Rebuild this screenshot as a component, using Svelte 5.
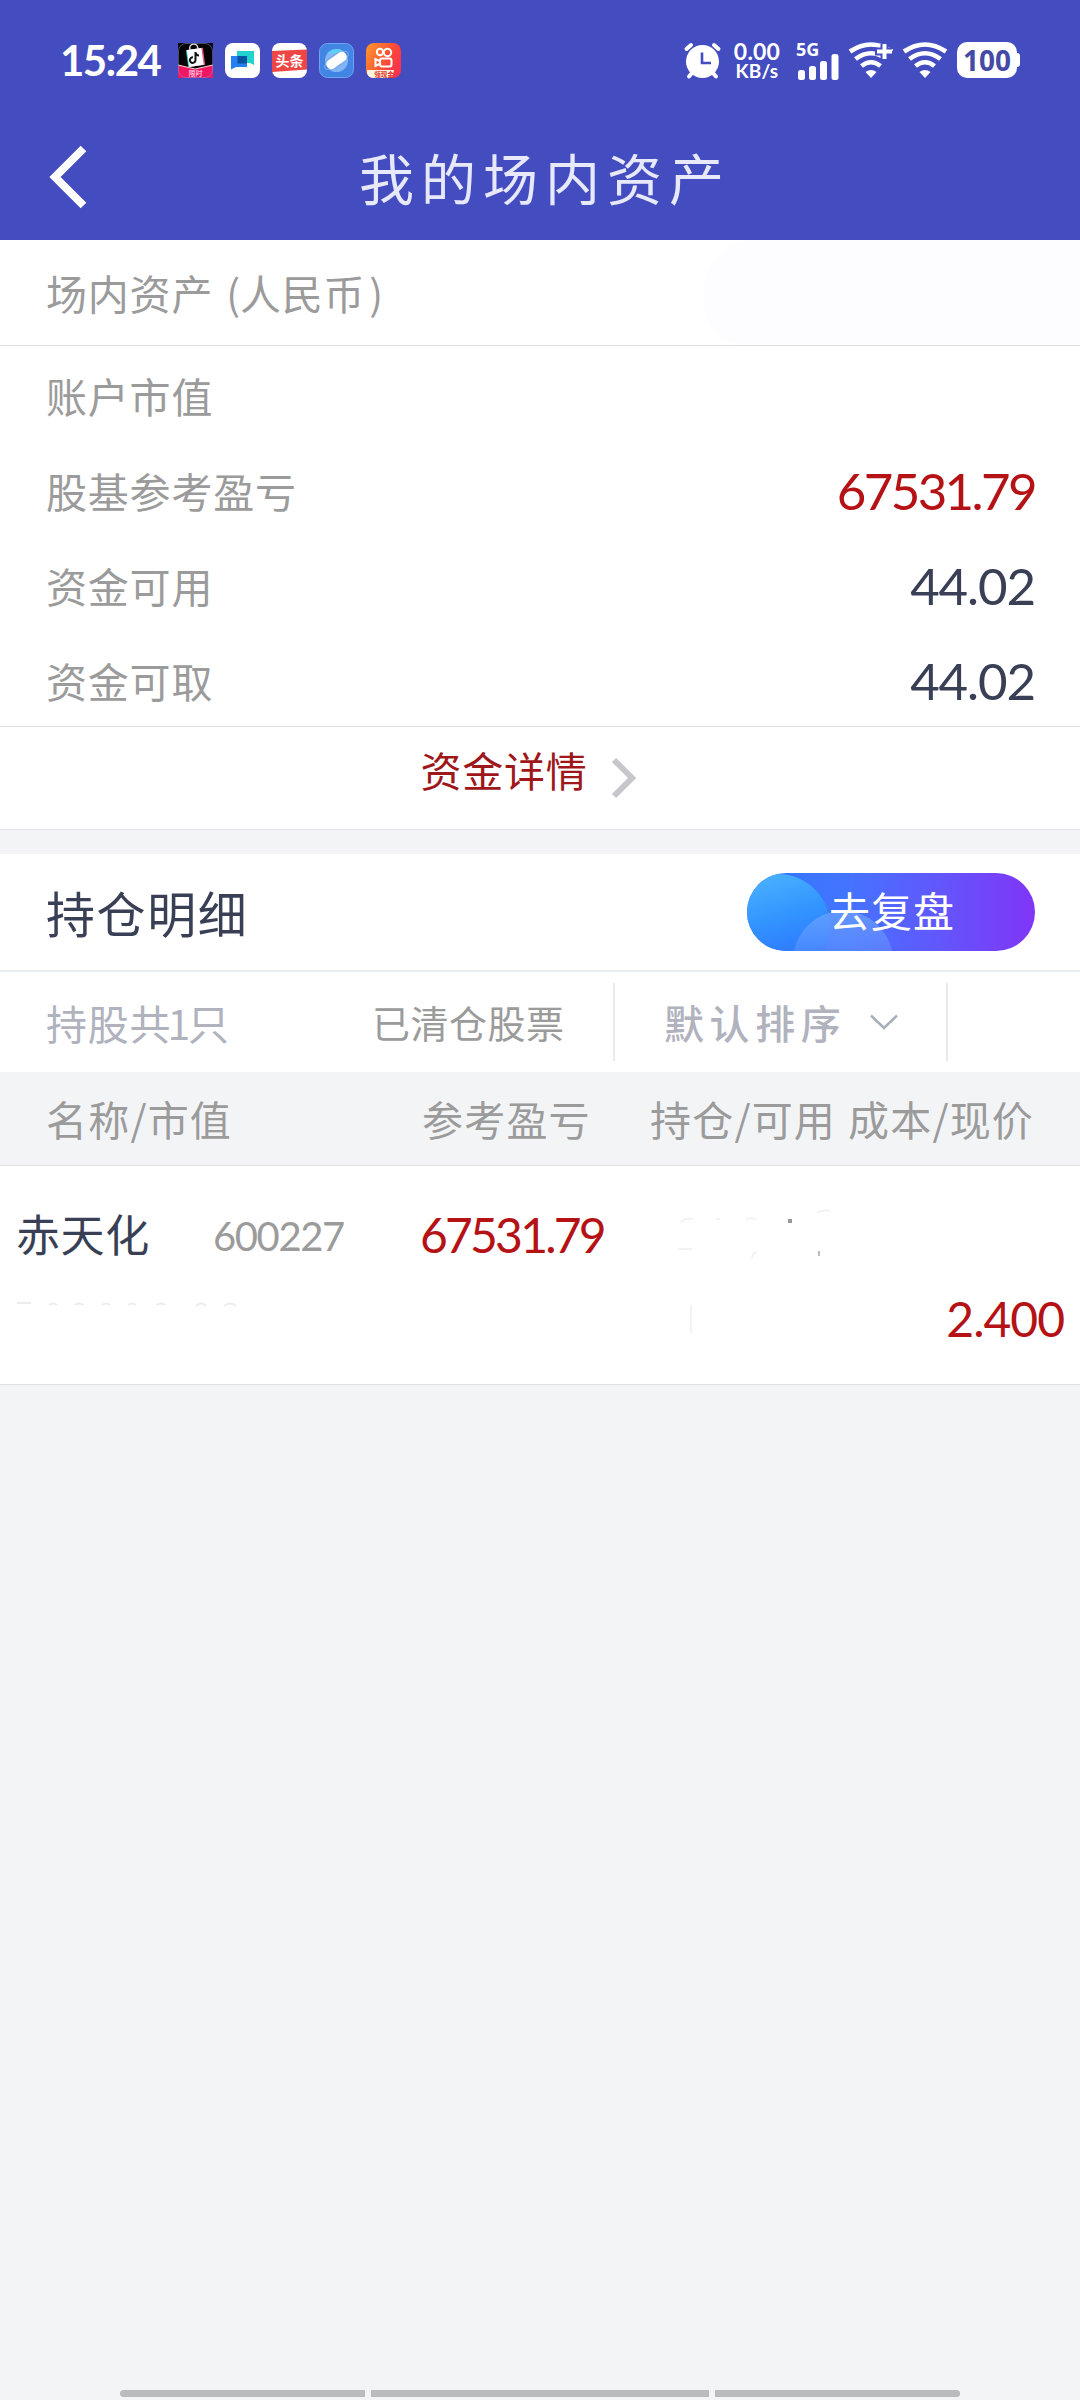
<script>
  const summary = [
    { label: '账户市值', value: '' },
    { label: '股基参考盈亏', value: '67531.79', gain: true },
    { label: '资金可用', value: '44.02' },
    { label: '资金可取', value: '44.02' }
  ];
  const holding = { name: '赤天化', code: '600227', profit: '67531.79', price: '2.400' };
</script>

<div class="screen">
  <header>
    <div class="status">
      <span class="time">15:24</span>
      <div class="apps">
        <svg viewBox="0 0 35 35">
          <defs><clipPath id="app"><rect width="35" height="35" rx="8" /></clipPath></defs>
          <g clip-path="url(#app)">
            <rect width="35" height="35" fill="#050508" />
            <g transform="rotate(-8 17 14)">
              <path d="M13 7V5a4 4 0 0 1 8 0v2" fill="none" stroke="#ddd" stroke-width="1.5" />
              <rect x="9" y="6" width="16" height="17" fill="#35dcd8" />
              <rect x="11" y="6" width="15" height="17" fill="#f4577c" />
              <rect x="10" y="6" width="14.500" height="17" fill="#fff" />
            </g>
            <path d="M17.500 9v8a2.800 2.800 0 1 1-2.500-2.700M17.500 9.500c.5 2 1.500 3 3.500 3" fill="none" stroke="#111" stroke-width="2" />
            <path d="M0 22l17 4 18-4v13H0z" fill="#ef1764" />
            <path d="M0 22l17 4 18-4" fill="none" stroke="#ffd4ce" stroke-width="1" />
          </g>
          <rect x=".5" y=".5" width="34" height="34" rx="7.500" fill="none" stroke="#8a8fd0" stroke-opacity=".5" />
          <text x="17.500" y="33" font-size="7" font-weight="700" fill="#ffb8d2" text-anchor="middle">限时</text>
        </svg>
        <svg viewBox="0 0 35 35">
          <rect width="35" height="35" rx="8" fill="#fff" />
          <path d="M12 8h17v14l-4-2H12z" fill="#20d3ce" />
          <path d="M6 13h16v11H11l-5 2.500z" fill="#2580f4" />
          <rect x="12.500" y="13" width="9.500" height="7.500" fill="#06539f" />
        </svg>
        <svg viewBox="0 0 35 35">
          <rect width="35" height="35" rx="8" fill="#fff" />
          <path d="M0 8l35-1.500v20L0 29z" fill="#ee4645" />
          <text x="17.500" y="23" font-size="14" font-weight="700" fill="#fff" text-anchor="middle">头条</text>
        </svg>
        <svg viewBox="0 0 35 35">
          <rect x=".5" y=".5" width="34" height="34" rx="8" fill="#4285e4" stroke="#6ba6ef" />
          <circle cx="17.500" cy="17.500" r="11.500" fill="#83b5f4" />
          <path d="M8 11a11.500 11.500 0 0 1 17-2z" fill="#5bd0f6" />
          <ellipse cx="17.500" cy="17.500" rx="14" ry="6" transform="rotate(-35 17.500 17.500)" fill="#4285e4" />
          <ellipse cx="17.500" cy="17.500" rx="14" ry="5.500" transform="rotate(-35 17.500 17.500)" fill="none" stroke="#9cc5f7" stroke-width=".6" />
          <rect x="6" y="12.500" width="23" height="10" rx="5" transform="rotate(-35 17.500 17.500)" fill="#fff" />
        </svg>
        <svg viewBox="0 0 35 35">
          <defs><linearGradient id="ks" x1="0" y1="0" x2="1" y2=".5"><stop stop-color="#ff9a2c" /><stop offset=".7" stop-color="#fb4a35" /><stop offset="1" stop-color="#fb344a" /></linearGradient></defs>
          <rect width="35" height="35" rx="8" fill="url(#ks)" />
          <g fill="none" stroke="#fff" stroke-width="2">
            <circle cx="14" cy="9" r="3.200" /><circle cx="21.500" cy="9.500" r="3.700" />
            <rect x="14" y="15.500" width="11.500" height="8" rx="2" /><path d="M13.500 18l-4-2v7l4-2" />
          </g>
          <path d="M1 27h27l-2 8H8Q2 35 1 30z" fill="#fff2df" />
          <text x="18" y="33.500" font-size="6.500" font-weight="700" fill="#dc3028" text-anchor="middle">领现金</text>
        </svg>
      </div>

      <div class="indicators">
        <svg class="alarm" viewBox="0 0 37 37">
          <g stroke="#fff" stroke-width="4" stroke-linecap="round"><path d="M2.500 7L7 3M34.500 7L30 3M8 31l-3 3.500M29 31l3 3.500" /></g>
          <circle cx="18.500" cy="19.500" r="16.500" fill="#fff" />
          <path d="M18 10.500V21H27" fill="none" stroke="#444dbf" stroke-width="2.600" />
        </svg>
        <div class="speed"><span>0.00</span><span>KB/s</span></div>
        <div class="cell">
          <span>5G</span>
          <svg viewBox="0 0 41 26"><g fill="#fff"><rect y="16" width="7" height="10" rx="2.500" /><rect x="11" y="12" width="7" height="14" rx="2.500" /><rect x="22" y="7" width="7" height="19" rx="2.500" /><rect x="33.500" y="0" width="7" height="26" rx="2.500" /></g></svg>
        </div>
        <svg class="wifi plus" viewBox="0 0 45 37">
          <g fill="none" stroke="#fff" stroke-width="4.600"><path d="M1 9.500Q22 -4.500 43 9.500" /><path d="M6.500 17Q22 5.500 37.500 17" /><path d="M12.500 24Q22 16.500 31.500 24" /></g>
          <path d="M16.500 30Q22 26 27.500 30L22 36z" fill="#fff" />
          <path d="M26 9.500h17M35.500 2v17" stroke="#444dbf" stroke-width="8" />
          <path d="M28 9.500h15M35.500 2v15" stroke="#fff" stroke-width="4" />
        </svg>
        <svg class="wifi" viewBox="0 0 45 37">
          <g fill="none" stroke="#fff" stroke-width="4.600"><path d="M1 9.500Q22 -4.500 43 9.500" /><path d="M6.500 17Q22 5.500 37.500 17" /><path d="M12.500 24Q22 16.500 31.500 24" /></g>
          <path d="M16.500 30Q22 26 27.500 30L22 36z" fill="#fff" />
        </svg>
        <div class="battery">100</div>
      </div>
    </div>
    <div class="nav">
      <svg class="back" viewBox="0 0 37 64"><path d="M34.500 3.500L6 32l28.500 28.500" fill="none" stroke="#fff" stroke-width="8" /></svg>
      <h1>我的场内资产</h1>
    </div>
  </header>

  <section class="account"><span class="label">场内资产<b>(</b>人民币<b>)</b></span><i class="sheen"></i></section>

  <section class="summary">
    {#each summary as row}
      <div class="line">
        <span class="label">{row.label}</span>
        <span class="amount" class:gain={row.gain}>{row.value}</span>
      </div>
    {/each}
  </section>

  <div class="details">
    <span>资金详情</span>
    <svg viewBox="0 0 26 42"><path d="M3 3l18 18L3 39" fill="none" stroke="#c6c6cc" stroke-width="6" /></svg>
  </div>
  <div class="gap"></div>

  <div class="title">
    <h2>持仓明细</h2>
    <div class="review">
      <svg viewBox="0 0 288 78">
        <defs>
          <linearGradient id="base"><stop stop-color="#2c78ff" /><stop offset=".35" stop-color="#4474ff" /><stop offset=".7" stop-color="#6553fb" /><stop offset="1" stop-color="#8035f8" /></linearGradient>
          <linearGradient id="disc" x1="0" y1="0" x2=".3" y2="1"><stop stop-color="#50b8ff" /><stop offset=".5" stop-color="#3396ff" /><stop offset="1" stop-color="#2d71ff" /></linearGradient>
          <linearGradient id="bubble" x1="0" y1="0" x2="0" y2="1"><stop stop-color="#6da5ff" stop-opacity=".7" /><stop offset=".6" stop-color="#739dff" stop-opacity=".2" /></linearGradient>
          <clipPath id="pill"><rect width="288" height="78" rx="39" /></clipPath>
        </defs>
        <g clip-path="url(#pill)">
          <rect width="288" height="78" fill="url(#base)" />
          <circle cx="31" cy="53" r="52" fill="url(#disc)" />
          <circle cx="96" cy="88" r="50" fill="url(#bubble)" />
        </g>
      </svg>
      <span>去复盘</span>
    </div>
  </div>

  <div class="tools">
    <span class="count">持股共<b>1</b>只</span>
    <span class="cleared">已清仓股票</span>
    <div class="sort">
      <span>默认排序</span>
      <svg viewBox="0 0 28 16"><path d="M1 1.500l13 12.500L27 1.500" fill="none" stroke="#a8b0bd" stroke-width="2.600" /></svg>
    </div>
  </div>

  <div class="columns">
    <span>名称/市值</span><span>参考盈亏</span><span>持仓/可用</span><span>成本/现价</span>
  </div>

  <div class="stock">
    <div class="top">
      <span class="name">{holding.name}</span>
      <span class="code">{holding.code}</span>
      <span class="profit">{holding.profit}</span>
      <svg class="faded" viewBox="0 0 160 50">
        <g fill="none" stroke="#efefef" stroke-width="1.500"><path d="M4 12q4-4 12-3M1 39h14M39 9h4M69 10q5-4 10 0M75 48q0-5 5-6M140 3q6-4 13-2" /></g>
        <path d="M113 9v4" stroke="#999" stroke-width="4" />
        <path d="M142 41v5" stroke="#bbb" stroke-width="2" />
      </svg>
    </div>
    <div class="bottom">
      <svg class="trace" viewBox="0 0 225 8"><path d="M1 3h14M33 5q4-3 8 0M59 5q4-3 8 0M86 5q4-3 8 0M112 5q4-3 8 0M141 5q4-3 8 0M180 6q5-5 10 0M208 6q6-5 12 0" fill="none" stroke="#ececec" stroke-width="2" /></svg>
      <i class="tick"></i>
      <span class="price">{holding.price}</span>
    </div>
  </div>

  <footer><i></i><i></i><i></i></footer>
</div>

<style>
  :global(body) { margin: 0; background: #f3f4f6; }
  * { box-sizing: border-box; }
  svg { display: block; flex: none; overflow: visible; }
  span { white-space: nowrap; }
  b { font-weight: 400; }
  .screen {
    display: flex;
    flex-direction: column;
    width: 1080px;
    height: 2400px;
    overflow: hidden;
    background: #f3f4f6;
    font-family: "Noto Sans CJK SC", sans-serif;
    font-size: 41px;
    line-height: 1;
    color: #9b9b9b;
  }
  header { height: 240px; background: #444dbf; color: #fff; }
  .status { display: flex; align-items: center; height: 120px; padding: 0 58px 0 60px; }
  .time { width: 118px; font: 700 42px/1 Lato, sans-serif; letter-spacing: -1.600px; }
  .apps { display: flex; gap: 12px; }
  .apps svg { width: 35px; height: 35px; }
  .indicators { display: flex; align-items: center; margin-left: auto; height: 37px; }
  .alarm { width: 37px; height: 37px; }
  .speed { display: flex; flex-direction: column; align-items: center; width: 48px; margin-left: 12px; font: 700 23px/20px Lato, sans-serif; letter-spacing: .2px; }
  .speed span:last-child { font-size: 19px; line-height: 19px; }
  .cell { width: 41px; height: 37px; margin-left: 17px; display: flex; flex-direction: column; }
  .cell span { height: 12px; font: 700 18px/14px "Noto Sans", sans-serif; margin-left: -2px; }
  .cell svg { width: 41px; height: 26px; }
  .wifi { width: 45px; height: 37px; margin-left: 9px; }
  .wifi.plus { margin-left: 10px; }
  .battery { position: relative; width: 60px; height: 36px; margin: 0 5px 0 9px; border-radius: 10px; background: #fff; color: #444aa5; text-align: center; font: 700 28px/36px "Noto Sans", sans-serif; }
  .battery::after { content: ""; position: absolute; left: 59px; top: 11px; width: 4px; height: 14px; border-radius: 0 3px 3px 0; background: #fff; }
  .nav { display: flex; align-items: center; height: 120px; padding: 0 49px; }
  .back { width: 37px; height: 64px; margin-top: -6px; }
  h1 { margin: -7px 0 0 273px; font-size: 55px; line-height: 1; font-weight: 400; letter-spacing: 7px; color: #e8e8fb; }
  .label { letter-spacing: .8px; }
  .account { display: flex; align-items: center; justify-content: space-between; height: 106px; padding-left: 46px; background: #fff; border-bottom: 1px solid #e0e0e1; }
  .account b { margin: 0 -1px 0 13px; }
  .account b:last-child { margin-left: 4px; }
  .sheen { width: 376px; height: 105px; background: #fdfdff; border-radius: 50px 0 0 40px; }
  .summary { height: 381px; padding: 2px 45px 0 46px; background: #fff; border-bottom: 1px solid #e0e0e1; }
  .line { display: flex; align-items: center; justify-content: space-between; height: 95px; }
  .amount { font-family: Lato, sans-serif; font-size: 51px; letter-spacing: -1.100px; color: #393f55; }
  .gain, .profit, .price { color: #b51216; }
  .gain { letter-spacing: -2.600px; }
  .details { display: flex; justify-content: center; height: 103px; padding: 22px 0 0 0; background: #fff; border-bottom: 1px solid #dfe0e2; color: #9e171b; }
  .details span { letter-spacing: .8px; margin-left: -23px; }
  .details svg { width: 26px; height: 42px; margin: 8px 0 0 23px; }
  .gap { height: 24px; }
  .title { display: flex; align-items: center; justify-content: space-between; height: 118px; padding: 0 45px 0 46px; background: #fff; border-bottom: 2px solid #e8ecee; }
  h2 { margin: -2px 0 0; font-size: 49px; line-height: 1; font-weight: 400; letter-spacing: 1.600px; color: #393f55; }
  .review { display: grid; width: 288px; height: 78px; }
  .review > * { grid-area: 1 / 1; }
  .review svg { width: 288px; height: 78px; }
  .review span { z-index: 1; align-self: center; margin: -5px 0 0 82px; color: #fff; letter-spacing: 1px; }
  .tools { display: flex; align-items: center; height: 100px; padding-left: 46px; background: #fff; }
  .count { width: 326px; color: #b0b2bd; letter-spacing: .8px; }
  .count b { margin: 0 -3px 0 -4px; }
  .cleared { width: 241px; font-size: 38px; letter-spacing: .5px; }
  .sort { display: flex; align-items: center; width: 335px; height: 78px; padding-left: 49px; border: solid #e7ebed; border-width: 0 2px; font-weight: 500; font-size: 40px; letter-spacing: 5.600px; color: #b0b2bd; }
  .sort svg { width: 28px; height: 16px; margin-left: 24px; }
  .columns { display: grid; grid-template-columns: 376px 228px 198px 1fr; align-items: center; height: 94px; padding-left: 46px; border-bottom: 1px solid #e0e1e3; letter-spacing: 1.200px; }
  .stock { height: 219px; padding: 26px 16px 0; background: #fff; border-bottom: 1px solid #e0e1e3; font-family: Lato, sans-serif; }
  .top { display: flex; align-items: center; height: 85px; }
  .name { width: 197px; margin-top: -4px; font: 400 44px/1 "Noto Sans CJK SC", sans-serif; letter-spacing: .6px; color: #393f55; }
  .code { width: 207px; margin-top: 2px; font-size: 40px; letter-spacing: -1.400px; }
  .profit { width: 257px; font-size: 48px; letter-spacing: -2.800px; }
  .faded { width: 160px; height: 50px; }
  .bottom { display: flex; align-items: center; height: 84px; }
  .trace { width: 225px; height: 8px; margin-bottom: 30px; }
  .tick { width: 2px; height: 28px; margin-left: 449px; background: #f0f4f4; }
  .price { margin-left: auto; font-size: 48px; letter-spacing: -1px; }
  footer { display: flex; gap: 6px; margin: auto 120px 3px; height: 7px; }
  footer i { width: 245px; background: #b9bbbd; }
  footer i:nth-child(2) { width: 338px; }
  footer i:first-child { border-radius: 4px 0 0 4px; }
  footer i:last-child { border-radius: 0 4px 4px 0; }
</style>
